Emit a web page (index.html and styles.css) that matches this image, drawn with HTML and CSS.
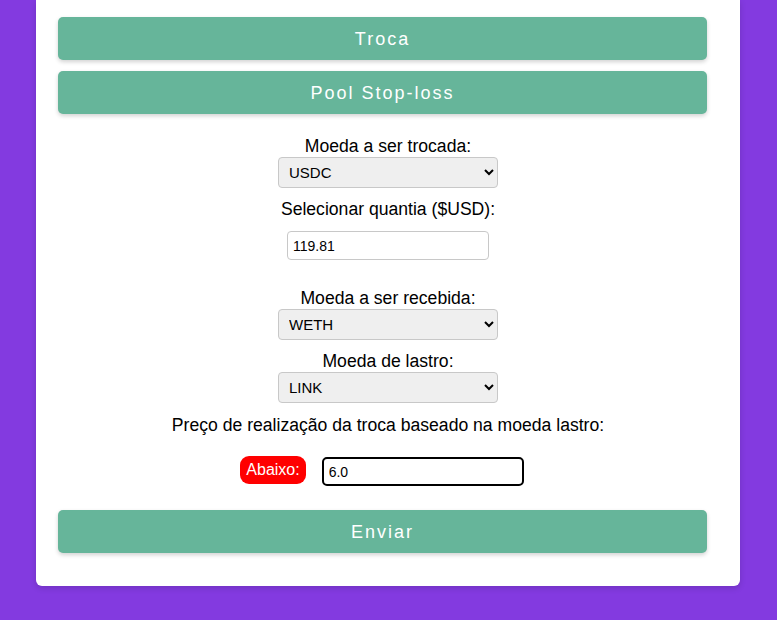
FILE: index.html
```html
<!DOCTYPE html>
<html>
<head>
<meta charset="utf-8">
<link rel="stylesheet" href="styles.css">
</head>
<body>
<div class="card">
  <button class="btn">Troca</button>
  <button class="btn btn-second">Pool Stop-loss</button>
  <form class="form">
    <label class="lbl lbl-first">Moeda a ser trocada:</label>
    <select class="sel"><option>USDC</option></select>
    <label class="lbl lbl-qty">Selecionar quantia ($USD):</label>
    <input class="inp" type="text" value="119.81">
    <label class="lbl lbl-recv">Moeda a ser recebida:</label>
    <select class="sel"><option>WETH</option></select>
    <label class="lbl">Moeda de lastro:</label>
    <select class="sel"><option>LINK</option></select>
    <label class="lbl lbl-price">Preço de realização da troca baseado na moeda lastro:</label>
    <div class="row">
      <span class="badge">Abaixo:</span>
      <input class="inp inp-focus" type="text" value="6.0" autofocus>
    </div>
    <button class="btn btn-send" type="button">Enviar</button>
  </form>
</div>
</body>
</html>
```
FILE: styles.css
```css
html, body {
  margin: 0;
  padding: 0;
  background: #833ae0;
  height: 620px;
  overflow: hidden;
}
.card {
  margin: 0 37px 0 36px;
  background: #fff;
  border-radius: 0 0 6px 6px;
  padding: 17px 22px 33px 22px;
  box-shadow: 0 2px 6px rgba(0,0,0,0.15);
  display: flex;
  flex-direction: column;
  font-family: "Liberation Sans", Arial, sans-serif;
}
.btn {
  display: block;
  align-self: flex-start;
  width: 649px;
  height: 43px;
  border: none;
  border-radius: 5px;
  background: #66b59a;
  color: #fff;
  font-family: "Liberation Sans", Arial, sans-serif;
  font-size: 18px;
  letter-spacing: 2px;
  box-shadow: 0 2px 4px rgba(0,0,0,0.18);
  padding: 2px 0 0 0;
  cursor: pointer;
}
.btn-second {
  margin-top: 11px;
}
.form {
  display: flex;
  flex-direction: column;
  align-items: center;
  margin: 0;
}
.lbl {
  font-size: 17.6px;
  color: #000;
  line-height: 21px;
  margin-top: 11px;
}
.lbl-first {
  margin-top: 22px;
}
.lbl-qty {
  margin-top: 11px;
}
.lbl-recv {
  margin-top: 28px;
}
.lbl-price {
  margin-top: 12px;
}
.sel {
  width: 220px;
  height: 31px;
  margin-top: 0;
  font-family: "Liberation Sans", Arial, sans-serif;
  font-size: 15px;
  background: #efefef;
  border: 1px solid #c8c8c8;
  border-radius: 4px;
  padding: 0 6px;
  color: #000;
}
.inp {
  width: 202px;
  height: 29px;
  box-sizing: border-box;
  margin-top: 11px;
  font-family: "Liberation Sans", Arial, sans-serif;
  font-size: 14px;
  border: 1px solid #c8c8c8;
  border-radius: 4px;
  padding: 0 5px;
  color: #000;
  background: #fff;
}
.row {
  display: flex;
  align-items: flex-start;
  gap: 16px;
  margin-top: 20px;
  margin-right: 12px;
}
.badge {
  background: #ff0000;
  color: #fff;
  font-size: 16px;
  border-radius: 9px;
  padding: 5px 6px;
  line-height: 18px;
}
.inp-focus {
  margin-top: 1px;
  height: 29px;
  border: 2px solid #000;
  border-radius: 5px;
  outline: none;
}
.btn-send {
  margin-top: 24px;
}
```
